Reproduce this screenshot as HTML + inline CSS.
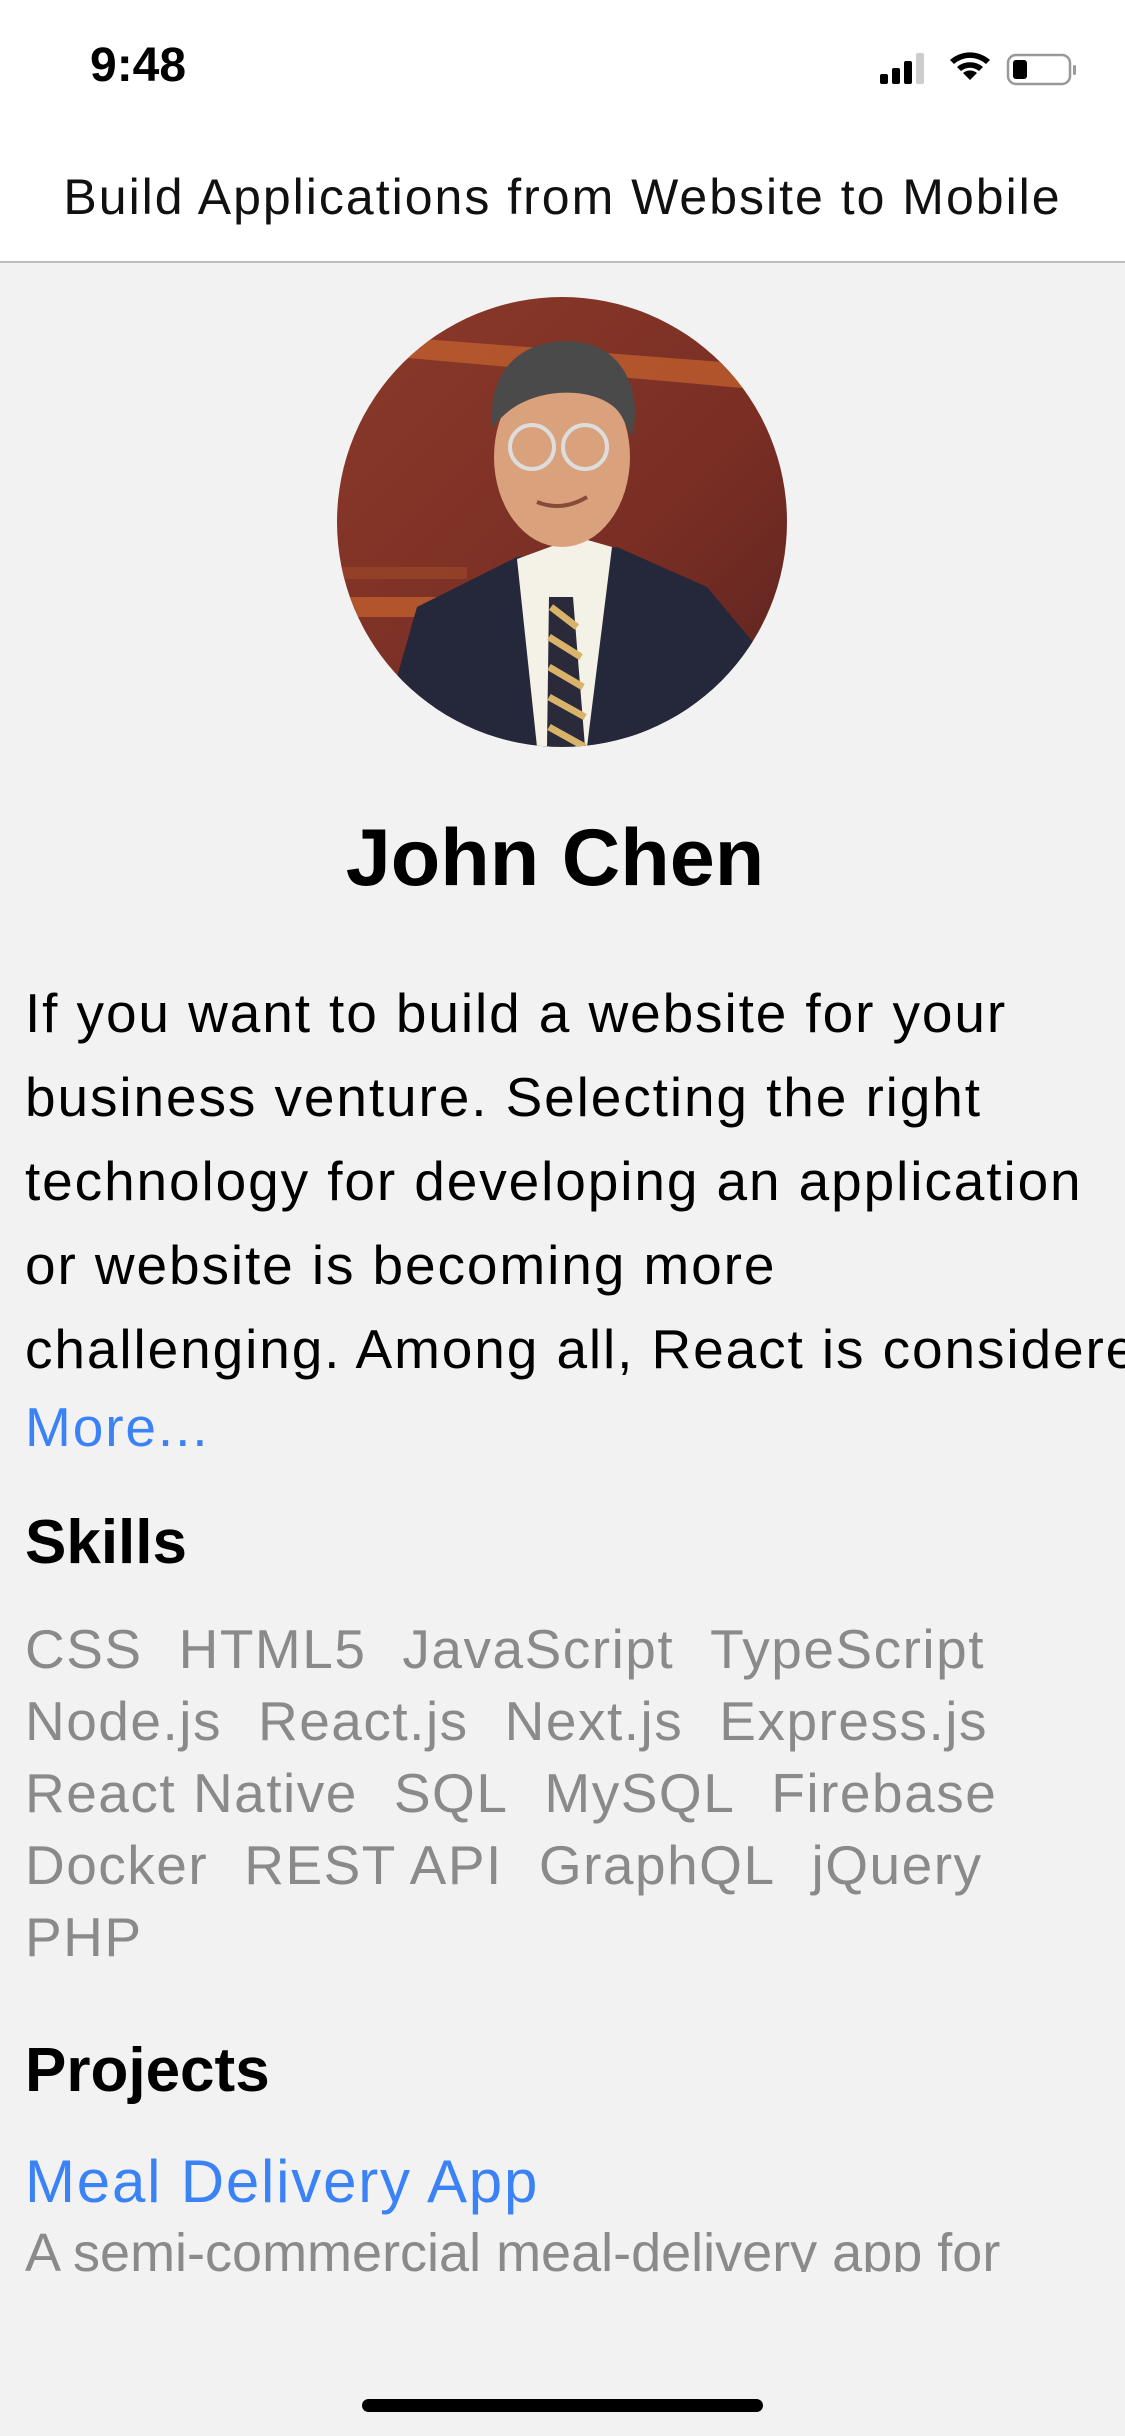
<!DOCTYPE html>
<html><head><meta charset="utf-8"><style>
*{margin:0;padding:0;box-sizing:border-box}
body{width:1125px;height:2436px;background:#f2f2f2;font-family:"Liberation Sans",sans-serif;position:relative;overflow:hidden}
.top{position:absolute;left:0;top:0;width:1125px;height:263px;background:#fff;border-bottom:2px solid #bdbdbd}
.time{position:absolute;left:90px;top:38px;font-size:48px;font-weight:bold;color:#000}
.title{position:absolute;left:0;width:1125px;top:168px;text-align:center;font-size:50px;color:#111;letter-spacing:2px}
.abs{position:absolute;left:25px}
.p{top:971px;width:1100px;font-size:55px;letter-spacing:1.9px;line-height:84px;color:#000;white-space:nowrap;overflow:hidden}
.blue{color:#3b82f6}
.h{font-weight:bold;font-size:62px;color:#000}
.sk{top:1613px;width:1040px;font-size:55px;letter-spacing:1.5px;line-height:72px;color:#8a8a8a}
.sk span{margin-right:36px;display:inline-block}
</style></head><body>
<div class="top">
<div class="time">9:48</div>
<svg style="position:absolute;left:878px;top:50px" width="210" height="40" viewBox="0 0 210 40">
<rect x="2" y="24" width="8" height="10" rx="2" fill="#000"/>
<rect x="14" y="18" width="8" height="16" rx="2" fill="#000"/>
<rect x="26" y="11" width="8" height="23" rx="2" fill="#000"/>
<rect x="38" y="3" width="8" height="31" rx="2" fill="#ccc"/>
<path d="M92 30 L85 23 A11 11 0 0 1 99 23 Z" fill="#000"/>
<path d="M79 17 A20 20 0 0 1 105 17 L101 21 A14 14 0 0 0 83 21 Z" fill="#000"/>
<path d="M72 10 A30 30 0 0 1 112 10 L108 14 A24 24 0 0 0 76 14 Z" fill="#000"/>
<rect x="130" y="5" width="62" height="29" rx="8" fill="none" stroke="#999" stroke-width="2.5"/>
<rect x="135" y="10" width="14" height="19" rx="3" fill="#000"/>
<rect x="195" y="15" width="3" height="10" rx="1.5" fill="#999"/>
</svg>
<div class="title">Build Applications from Website to Mobile</div>
</div>
<svg style="position:absolute;left:337px;top:297px" width="450" height="450" viewBox="0 0 450 450">
<defs>
<clipPath id="c"><circle cx="225" cy="225" r="225"/></clipPath>
<linearGradient id="bg" x1="0" y1="0" x2="1" y2="1"><stop offset="0" stop-color="#8a3a2a"/><stop offset="0.6" stop-color="#7a2e24"/><stop offset="1" stop-color="#5a2420"/></linearGradient>
</defs>
<g clip-path="url(#c)">
<rect width="450" height="450" fill="url(#bg)"/>
<path d="M60 40 L450 70 L450 95 L60 60Z" fill="#c8642f" opacity="0.7"/>
<path d="M0 300 L140 300 L140 320 L0 320Z" fill="#c8642f" opacity="0.7"/>
<path d="M0 270 L130 270 L130 282 L0 282Z" fill="#a04a2a" opacity="0.6"/>
<path d="M40 450 L80 310 L180 260 L280 250 L370 290 L420 350 L450 450Z" fill="#25273a"/>
<path d="M180 262 L200 450 L250 450 L275 250 L240 240Z" fill="#f4f1e6"/>
<path d="M212 300 L236 300 L248 450 L210 450Z" fill="#2a2a3a"/>
<path d="M214 310 L240 330 M212 340 L244 360 M212 370 L246 390 M212 400 L248 420 M212 430 L248 450" stroke="#d9b36a" stroke-width="7"/>
<ellipse cx="225" cy="160" rx="68" ry="90" fill="#d9a27c"/>
<path d="M155 130 C150 60 200 40 240 45 C290 50 305 100 295 140 L285 120 C270 90 200 85 165 120Z" fill="#4a4a4a"/>
<circle cx="195" cy="150" r="22" fill="none" stroke="#ddd" stroke-width="4"/>
<circle cx="248" cy="150" r="22" fill="none" stroke="#ddd" stroke-width="4"/>
<path d="M200 205 Q225 215 250 200" stroke="#8a4a3a" stroke-width="4" fill="none"/>
</g>
</svg>
<div style="position:absolute;left:0;width:1110px;top:812px;text-align:center;font-size:81px;font-weight:bold;color:#000">John Chen</div>
<div class="abs p">If you want to build a website for your<br>business venture. Selecting the right<br>technology for developing an application<br>or website is becoming more<br>challenging. Among all, React is considered</div>
<div class="abs blue" style="top:1394px;font-size:55px;letter-spacing:1.9px;line-height:66px">More...</div>
<div class="abs h" style="top:1505px;line-height:76px">Skills</div>
<div class="abs sk"><span>CSS</span><span>HTML5</span><span>JavaScript</span><span>TypeScript</span><span>Node.js</span><span>React.js</span><span>Next.js</span><span>Express.js</span><span>React Native</span><span>SQL</span><span>MySQL</span><span>Firebase</span><span>Docker</span><span>REST API</span><span>GraphQL</span><span>jQuery</span><span>PHP</span></div>
<div class="abs h" style="top:2033px;line-height:76px">Projects</div>
<div class="abs blue" style="top:2144px;font-size:60px;letter-spacing:1.8px;line-height:76px">Meal Delivery App</div>
<div class="abs" style="top:2218px;height:54px;overflow:hidden;font-size:54px;letter-spacing:0px;line-height:70px;color:#8a8a8a;white-space:nowrap">A semi-commercial meal-delivery app for</div>
<div style="position:absolute;left:362px;top:2399px;width:401px;height:13px;border-radius:7px;background:#000"></div>
</body></html>
